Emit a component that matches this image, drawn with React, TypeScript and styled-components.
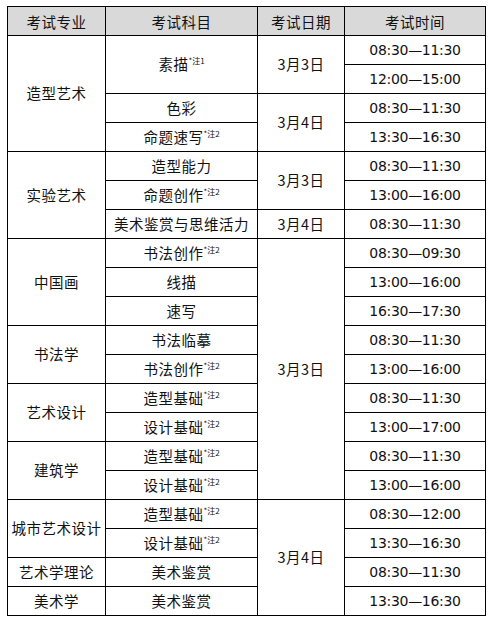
import styled, { createGlobalStyle } from 'styled-components'

const GlobalStyle = createGlobalStyle`
  body {
    margin: 0;
    background: #fff;
  }
`

const Page = styled.div`
  padding: 6px 0 0 7px;
`

const Table = styled.table`
  border-collapse: collapse;
  table-layout: fixed;
  width: 478px;
  font-family: 'Noto Sans CJK SC', 'Noto Sans', sans-serif;
  font-size: 14.5px;
  color: #111;
`

const HeadCell = styled.th`
  background: #d9d9d9;
  border: 1px solid #000;
  font-weight: 400;
  height: 28px;
  padding: 0;
  text-align: center;
  letter-spacing: 0.5px;
`

const Cell = styled.td<{ $mono?: boolean }>`
  border: 1px solid #000;
  height: 28px;
  padding: 0;
  text-align: center;
  line-height: 1;
  letter-spacing: 0.5px;
  white-space: nowrap;
  font-family: ${({ $mono }) =>
    $mono ? "'DejaVu Sans', 'Noto Sans CJK SC', sans-serif" : 'inherit'};
  font-size: ${({ $mono }) => ($mono ? '14px' : 'inherit')};
  ${({ $mono }) => ($mono ? 'letter-spacing: -0.3px;' : '')}
`

const Note = styled.sup`
  font-size: 8px;
  letter-spacing: 0;
  vertical-align: 6px;
  line-height: 0;
`

type Row = {
  major?: string
  majorSpan?: number
  subject: string
  note?: string
  date?: string
  dateSpan?: number
  time: string
}

const rows: Row[] = [
  { major: '造型艺术', majorSpan: 4, subject: '素描', note: '*注1', date: '3月3日', dateSpan: 2, time: '08:30—11:30' },
  { subject: '', time: '12:00—15:00' },
  { subject: '色彩', date: '3月4日', dateSpan: 2, time: '08:30—11:30' },
  { subject: '命题速写', note: '*注2', time: '13:30—16:30' },
  { major: '实验艺术', majorSpan: 3, subject: '造型能力', date: '3月3日', dateSpan: 2, time: '08:30—11:30' },
  { subject: '命题创作', note: '*注2', time: '13:00—16:00' },
  { subject: '美术鉴赏与思维活力', date: '3月4日', dateSpan: 1, time: '08:30—11:30' },
  { major: '中国画', majorSpan: 3, subject: '书法创作', note: '*注2', date: '3月3日', dateSpan: 9, time: '08:30—09:30' },
  { subject: '线描', time: '13:00—16:00' },
  { subject: '速写', time: '16:30—17:30' },
  { major: '书法学', majorSpan: 2, subject: '书法临摹', time: '08:30—11:30' },
  { subject: '书法创作', note: '*注2', time: '13:00—16:00' },
  { major: '艺术设计', majorSpan: 2, subject: '造型基础', note: '*注2', time: '08:30—11:30' },
  { subject: '设计基础', note: '*注2', time: '13:00—17:00' },
  { major: '建筑学', majorSpan: 2, subject: '造型基础', note: '*注2', time: '08:30—11:30' },
  { subject: '设计基础', note: '*注2', time: '13:00—16:00' },
  { major: '城市艺术设计', majorSpan: 2, subject: '造型基础', note: '*注2', date: '3月4日', dateSpan: 4, time: '08:30—12:00' },
  { subject: '设计基础', note: '*注2', time: '13:30—16:30' },
  { major: '艺术学理论', majorSpan: 1, subject: '美术鉴赏', time: '08:30—11:30' },
  { major: '美术学', majorSpan: 1, subject: '美术鉴赏', time: '13:30—16:30' }
]

const App = () => (
  <Page>
    <GlobalStyle />
    <Table>
      <colgroup>
        <col style={{ width: 98 }} />
        <col style={{ width: 152 }} />
        <col style={{ width: 87 }} />
        <col style={{ width: 141 }} />
      </colgroup>
      <thead>
        <tr>
          <HeadCell>考试专业</HeadCell>
          <HeadCell>考试科目</HeadCell>
          <HeadCell>考试日期</HeadCell>
          <HeadCell>考试时间</HeadCell>
        </tr>
      </thead>
      <tbody>
        {rows.map((r, i) => (
          <tr key={i}>
            {r.major && <Cell rowSpan={r.majorSpan}>{r.major}</Cell>}
            {r.subject && (
              <Cell rowSpan={i === 0 ? 2 : 1}>
                {r.subject}
                {r.note && <Note>{r.note}</Note>}
              </Cell>
            )}
            {r.date && <Cell rowSpan={r.dateSpan}>{r.date}</Cell>}
            <Cell $mono>{r.time}</Cell>
          </tr>
        ))}
      </tbody>
    </Table>
  </Page>
)

export default App
